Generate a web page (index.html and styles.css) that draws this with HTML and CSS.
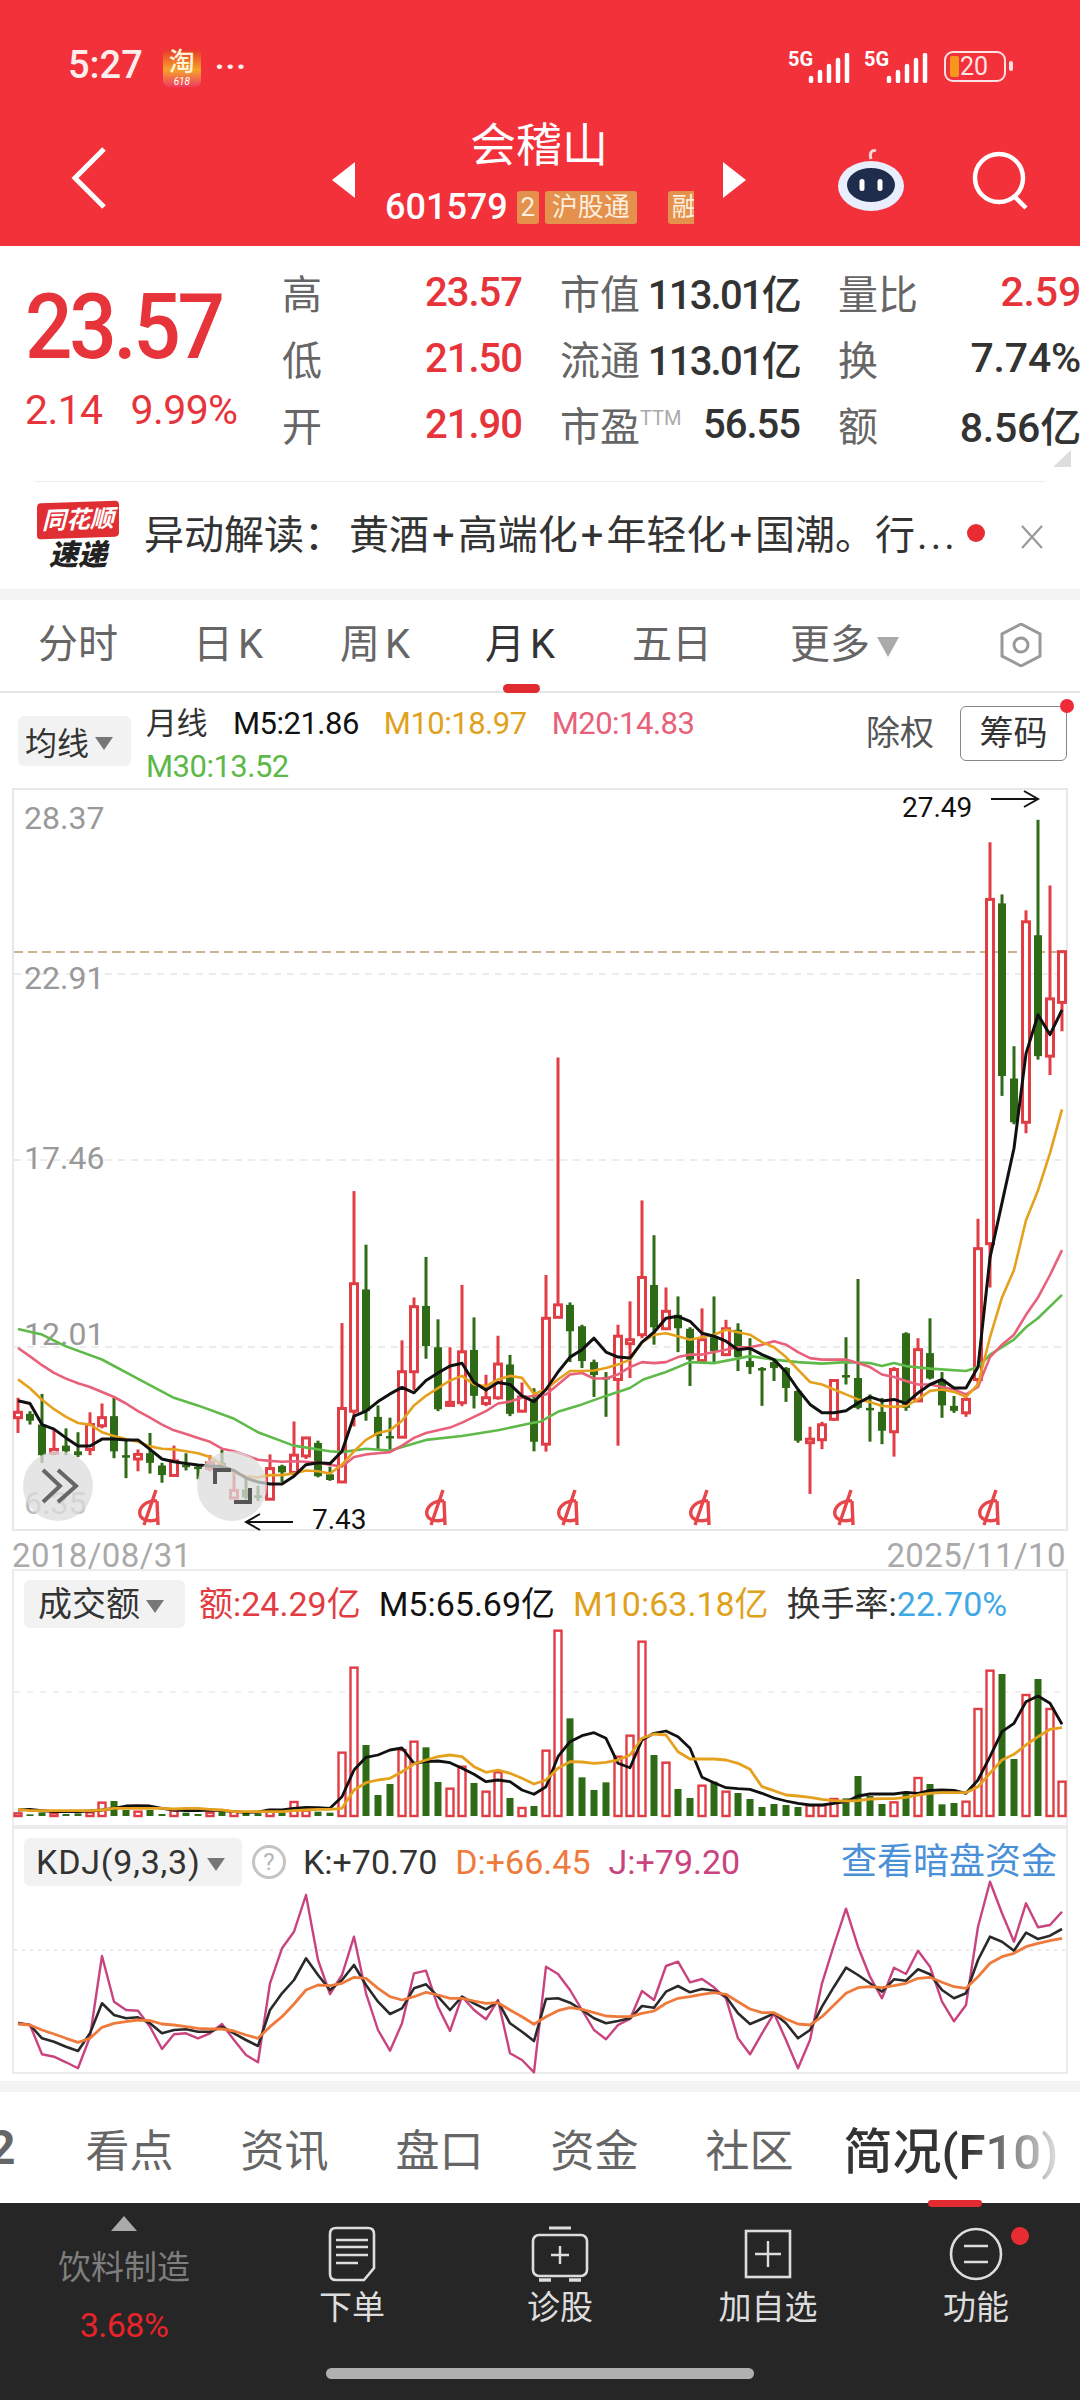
FILE: index.html
```html
<!DOCTYPE html>
<html lang="zh-CN">
<head>
  <meta charset="UTF-8" />
  <title>会稽山 601579</title>
  <link rel="stylesheet" href="styles.css">
</head>
<body>

<header class="top">
  <div class="status">
    <span class="clock">5:27</span>
    <span class="tb-icon"><b>淘</b><i>618</i></span>
    <span class="more-dots">···</span>
    <span class="status-right">
      <span class="signal"><em>5G</em><svg width="44" height="30" viewBox="0 0 44 30"><g stroke="#fff" stroke-width="4.5" stroke-linecap="round"><path d="M3 28v-3"/><path d="M12 28v-9"/><path d="M21 28v-15"/><path d="M30 28v-21"/><path d="M39 28v-26"/></g></svg></span>
      <span class="signal"><em>5G</em><svg width="44" height="30" viewBox="0 0 44 30"><g stroke="#fff" stroke-width="4.5" stroke-linecap="round"><path d="M3 28v-3"/><path d="M12 28v-9"/><path d="M21 28v-15"/><path d="M30 28v-21"/><path d="M39 28v-26"/></g></svg></span>
      <span class="battery"><i></i><b>20</b></span><span class="battery-nub"></span>
    </span>
  </div>
  <div class="titlebar">
    <svg class="back" width="40" height="64" viewBox="0 0 40 64"><path d="M34 3 L5 32 L34 61" fill="none" stroke="#fff" stroke-width="5"/></svg>
    <div class="title-mid">
      <span class="tri-left"></span>
      <div class="title-text">
        <h1>会稽山</h1>
        <div class="code-row"><span class="code">601579</span><span class="tag tag-num">2</span><span class="tag">沪股通</span><span class="tag tag-cut">融</span></div>
      </div>
      <span class="tri-right"></span>
    </div>
    <svg class="robot" width="70" height="66" viewBox="0 0 70 66">
      <path d="M35 12 C33 6 36 2 40 4" fill="none" stroke="#f4d5d8" stroke-width="3"/>
      <ellipse cx="35" cy="39" rx="33" ry="25" fill="#e8eefb"/>
      <ellipse cx="35" cy="38" rx="24" ry="17" fill="#1f2d4d"/>
      <rect x="23.5" y="32" width="5" height="12" rx="2.5" fill="#fff"/>
      <rect x="41.5" y="32" width="5" height="12" rx="2.5" fill="#fff"/>
    </svg>
    <svg class="search" width="58" height="60" viewBox="0 0 58 60"><circle cx="27" cy="27" r="24" fill="none" stroke="#fff" stroke-width="4.5"/><path d="M42 45 L54 57" stroke="#fff" stroke-width="4.5"/></svg>
  </div>
</header>

<section class="quote">
  <div class="price-box">
    <div class="price">23.57</div>
    <div class="change"><span>2.14</span><span>9.99%</span></div>
  </div>
  <div class="stats">
    <div class="stat"><label>高</label><span class="up">23.57</span></div>
    <div class="stat"><label>市值</label><span class="tight">113.01亿</span></div>
    <div class="stat wide"><label>量比</label><span class="up">2.59</span></div>
    <div class="stat"><label>低</label><span class="up">21.50</span></div>
    <div class="stat"><label>流通</label><span class="tight">113.01亿</span></div>
    <div class="stat wide"><label>换</label><span>7.74%</span></div>
    <div class="stat"><label>开</label><span class="up">21.90</span></div>
    <div class="stat"><label>市盈<sup>TTM</sup></label><span>56.55</span></div>
    <div class="stat wide"><label>额</label><span>8.56亿</span></div>
  </div>
  <span class="corner"></span>
</section>

<section class="notice">
  <div class="notice-logo"><b>同花顺</b><strong>速递</strong></div>
  <p>异动解读<u>：</u>黄酒<i>+</i>高端化<i>+</i>年轻化<i>+</i>国潮。行<s>...</s></p>
  <span class="dot"></span>
  <svg class="close" width="24" height="26" viewBox="0 0 24 26"><path d="M2 2 L22 24 M22 2 L2 24" stroke="#999" stroke-width="2.2"/></svg>
</section>

<nav class="period">
  <a>分时</a><a>日K</a><a>周K</a><a class="on">月K</a><a>五日</a><a class="more">更多<span class="arrow-down"></span></a>
  <svg class="hex" width="46" height="44" viewBox="0 0 46 44"><path d="M12 3 H34 L44 22 L34 41 H12 L2 22 Z" transform="rotate(90 23 22)" fill="none" stroke="#999" stroke-width="3"/><circle cx="23" cy="22" r="7" fill="none" stroke="#999" stroke-width="3"/></svg>
</nav>

<section class="ma-legend">
  <div class="chip"><span>均线</span><span class="arrow-down small"></span></div>
  <div class="ma-values">
    <span class="ma-name">月线</span><span class="c-black">M5:21.86</span><span class="c-orange">M10:18.97</span><span class="c-pink">M20:14.83</span><span class="c-green">M30:13.52</span>
  </div>
  <span class="fq">除权</span>
  <span class="chouma">筹码<i></i></span>
</section>

<section class="panel panel-k"><svg id="kline" width="1080" height="743"></svg></section>

<div class="dates"><span>2018/08/31</span><span>2025/11/10</span></div>

<section class="panel panel-vol">
  <svg id="vol" width="1080" height="258"></svg>
  <div class="panel-head">
    <div class="chip chip-vol"><span>成交额</span><span class="arrow-down small"></span></div>
    <span class="c-red">额:24.29亿</span><span class="c-black">M5:65.69亿</span><span class="c-orange">M10:63.18亿</span><span class="c-dark">换手率:<span class="c-blue">22.70%</span></span>
  </div>
</section>

<section class="panel panel-kdj">
  <svg id="kdj" width="1080" height="254"></svg>
  <div class="panel-head">
    <div class="chip chip-kdj"><span>KDJ(9,3,3)</span><span class="arrow-down small"></span></div>
    <span class="help">?</span>
    <span class="c-dark">K:+70.70</span><span class="c-d">D:+66.45</span><span class="c-j">J:+79.20</span>
    <a class="dark-pool">查看暗盘资金</a>
  </div>
</section>

<nav class="sub-tabs">
  <a class="cut">2</a><a>看点</a><a>资讯</a><a>盘口</a><a>资金</a><a>社区</a><a class="on">简况(F10)</a>
</nav>

<footer class="bottom">
  <div class="sector">
    <span class="tri-up"></span>
    <span class="sector-name">饮料制造</span>
    <span class="sector-pct">3.68%</span>
  </div>
  <a class="act">
    <svg width="48" height="56" viewBox="0 0 48 56"><path d="M8 2 H40 Q46 2 46 8 V42 L36 54 H8 Q2 54 2 48 V8 Q2 2 8 2 Z" fill="none" stroke="#ddd" stroke-width="2.6"/><path d="M8 14 H40 M8 21 H40 M8 29 H40 M8 37 H30" stroke="#ddd" stroke-width="2.6"/></svg>
    <span>下单</span>
  </a>
  <a class="act">
    <svg width="58" height="56" viewBox="0 0 58 56"><path d="M18 2 H40" stroke="#ddd" stroke-width="3"/><rect x="2" y="9" width="54" height="41" rx="6" fill="none" stroke="#ddd" stroke-width="2.6"/><path d="M8 54 H20 M38 54 H50" stroke="#ddd" stroke-width="3.5"/><path d="M29 20 V38 M20 29 H38" stroke="#ddd" stroke-width="2.4"/></svg>
    <span>诊股</span>
  </a>
  <a class="act">
    <svg width="48" height="56" viewBox="0 0 48 56"><rect x="2" y="5" width="44" height="46" fill="none" stroke="#ddd" stroke-width="2.6"/><path d="M24 15 V41 M11 28 H37" stroke="#ddd" stroke-width="2.4"/></svg>
    <span>加自选</span>
  </a>
  <a class="act">
    <svg width="54" height="56" viewBox="0 0 54 56"><circle cx="27" cy="28" r="25" fill="none" stroke="#ddd" stroke-width="2.6"/><path d="M15 20 H39 M15 36 H39" stroke="#ddd" stroke-width="2.6"/></svg>
    <span>功能</span>
    <i class="act-dot"></i>
  </a>
  <div class="home-bar"></div>
</footer>

<script src="chart.js"></script>
</body>
</html>
```

FILE: styles.css
```css
* { box-sizing: border-box; }
html, body { margin: 0; padding: 0; }
body {
  width: 1080px;
  height: 2400px;
  overflow: hidden;
  background: #fff;
  font-family: Roboto, "Noto Sans CJK SC", sans-serif;
  color: #333;
}
p, h1 { margin: 0; }
i, em { font-style: normal; }

/* red header */
.top { height: 246px; background: #f2313b; color: #fff; }
.status { height: 118px; padding: 46px 0 0 68px; display: flex; align-items: flex-start; }
.clock { font-size: 38px; line-height: 38px; font-weight: 500; color: #fdeeee; }
.tb-icon {
  width: 38px;
  height: 38px;
  margin: 3px 0 0 20px;
  border-radius: 6px;
  background: linear-gradient(#e8342a, #f5a32c 55%, #ef3b62);
  display: flex;
  flex-direction: column;
  align-items: center;
}
.tb-icon b { font-size: 26px; line-height: 27px; font-weight: 500; color: #fff3d8; }
.tb-icon i { font-size: 10px; line-height: 11px; color: #fff; font-style: italic; }
.more-dots { margin: 1px 0 0 14px; font-size: 32px; line-height: 38px; font-weight: 700; color: #fdeeee; letter-spacing: 1px; }
.status-right { margin-left: auto; padding-right: 67px; display: flex; align-items: flex-start; margin-top: 5px; }
.signal { position: relative; width: 76px; height: 32px; display: flex; justify-content: flex-end; padding-right: 14px; }
.signal + .signal { width: 78px; }
.signal em { position: absolute; left: -2px; top: -1px; font-size: 20px; line-height: 18px; font-weight: 700; }
.signal svg { display: block; margin-top: 2px; }
.battery {
  width: 62px;
  height: 31px;
  border: 2.5px solid #fde3e3;
  border-radius: 9px;
  display: flex;
  align-items: center;
  padding-left: 4px;
  gap: 1px;
}
.battery i { width: 9px; height: 21px; background: #f5961d; border-radius: 2px; }
.battery b { font-size: 25px; line-height: 26px; font-weight: 400; color: #fde3e3; }
.battery-nub { width: 4px; height: 10px; margin: 10px 0 0 3px; background: #fde3e3; border-radius: 2px; }

.titlebar { height: 128px; position: relative; display: flex; align-items: flex-start; padding-left: 70px; }
.back { margin-top: 28px; flex: none; width: 40px; }
.title-mid { width: 414px; margin-left: 222px; display: flex; align-items: flex-start; }
.tri-left, .tri-right { width: 0; height: 0; margin-top: 44px; border-top: 18px solid transparent; border-bottom: 18px solid transparent; flex: none; }
.tri-left { border-right: 23px solid #fff; }
.tri-right { border-left: 23px solid #fff; }
.title-text { width: 369px; text-align: center; }
.title-text h1 { font-size: 46px; line-height: 52px; font-weight: 400; margin: 1px 0 0 0; }
.code-row { margin-top: 14px; padding-left: 30px; height: 44px; width: 339px; display: flex; align-items: center; overflow: hidden; }
.code { font-size: 36px; line-height: 44px; font-weight: 500; margin-right: 9px; flex: none; }
.tag { height: 33px; padding: 0 7px; background: #e3914d; color: #fdeedd; font-size: 26px; line-height: 33px; border-radius: 3px; flex: none; margin-right: 6px; }
.tag-num { width: 22px; padding: 0; text-align: center; }
.tag-cut { margin-left: 25px; margin-right: 0; overflow: hidden; width: 26px; padding: 0 0 0 4px; border-radius: 3px 0 0 3px; }
.robot { position: absolute; left: 836px; top: 29px; }
.search { position: absolute; left: 972px; top: 33px; }

/* quote */
.quote { height: 235px; padding-top: 13px; display: flex; position: relative; }
.price-box { width: 282px; flex: none; padding: 24px 0 0 25px; }
.price { font-size: 90px; line-height: 90px; font-weight: 500; color: #e6343a; letter-spacing: -3.6px; transform: scaleX(0.93); transform-origin: left center; }
.change { margin-top: 17px; display: flex; gap: 28px; font-size: 41px; line-height: 40px; color: #e6343a; letter-spacing: -0.6px; }
.stats { display: grid; grid-template-columns: 240px 240px 243px; grid-auto-rows: 66px; column-gap: 38px; }
.stat { display: flex; justify-content: space-between; align-items: center; font-size: 40px; color: #333; white-space: nowrap; }
.stat label { color: #666; font-size: 40px; }
.stat span { letter-spacing: -1px; font-weight: 500; }
.stat span.tight { letter-spacing: -1.8px; }
.stat.wide span { font-size: 41px; letter-spacing: -0.2px; }
.stat .up { color: #e6343a; }
.stat sup { font-size: 20px; color: #aaa; vertical-align: 16px; line-height: 0; }
.corner { position: absolute; left: 1053px; top: 204px; width: 0; height: 0; border-bottom: 17px solid #ddd; border-left: 18px solid transparent; }

.notice { height: 108px; margin: 0 35px; border-top: 1px solid #ededed; display: flex; align-items: center; position: relative; }
.notice-logo { width: 82px; margin-left: 2px; flex: none; text-align: center; line-height: 1; }
.notice-logo b {
  display: block;
  height: 36px;
  background: #e02f33;
  color: #fff;
  border-radius: 4px;
  font-size: 24px;
  line-height: 36px;
  font-style: italic;
  transform: skewY(-2deg);
}
.notice-logo strong { display: block; margin-top: 2px; font-size: 29px; line-height: 30px; font-style: italic; font-weight: 900; color: #222; }
.notice p { margin-left: 25px; font-size: 40px; line-height: 48px; color: #333; white-space: nowrap; }
.notice p i { padding: 0 3px; }
.notice p u { text-decoration: none; padding-right: 5px; }
.notice p s { text-decoration: none; letter-spacing: 3px; margin-left: 2px; }
.notice .dot { position: absolute; left: 932px; top: 42px; width: 18px; height: 18px; background: #e82c31; border-radius: 50%; }
.notice .close { position: absolute; left: 985px; top: 42px; }

/* period tabs */
.period { height: 104px; border-top: 11px solid #f4f4f4; border-bottom: 2px solid #e6e6e6; position: relative; display: flex; align-items: flex-start; padding: 21px 0 0 38px; }
.period a { font-size: 40px; line-height: 48px; color: #666; white-space: nowrap; }
.period a:nth-child(1) { width: 155px; }
.period a:nth-child(2) { width: 147px; letter-spacing: 5px; }
.period a:nth-child(3) { width: 145px; letter-spacing: 5px; }
.period a:nth-child(4) { width: 147px; letter-spacing: 5px; }
.period a:nth-child(5) { width: 158px; }
.period a.on { color: #333; position: relative; }
.period a.on::after { content: ""; position: absolute; left: 18px; top: 63px; width: 37px; height: 9px; background: #e22b30; border-radius: 5px; }
.period .more { display: flex; align-items: center; height: 48px; }
.arrow-down { width: 0; height: 0; margin: 4px 0 0 7px; border-left: 11px solid transparent; border-right: 11px solid transparent; border-top: 20px solid #aaa; display: inline-block; }
.arrow-down.small { border-left-width: 9px; border-right-width: 9px; border-top: 13px solid #777; margin: 4px 0 0 6px; }
.hex { position: absolute; left: 998px; top: 23px; }

.ma-legend { height: 95px; position: relative; display: flex; padding: 23px 0 0 18px; }
.chip { height: 50px; padding: 0 7px; background: #f2f2f2; border-radius: 6px; display: inline-flex; align-items: center; font-size: 32px; color: #333; white-space: nowrap; flex: none; }
.ma-legend .chip { width: 113px; }
.ma-values { width: 570px; margin: -13px 0 0 15px; display: flex; flex-wrap: wrap; column-gap: 25px; font-size: 31px; line-height: 41px; letter-spacing: -0.5px; white-space: nowrap; }
.ma-name { color: #333; margin-right: 1px; }
.fq { position: absolute; left: 866px; top: 18px; font-size: 34px; line-height: 44px; color: #555; }
.chouma { position: absolute; left: 960px; top: 13px; width: 107px; height: 55px; border: 1.5px solid #888; border-radius: 6px; font-size: 34px; line-height: 52px; text-align: center; color: #333; }
.chouma i { position: absolute; right: -8px; top: -8px; width: 14px; height: 14px; background: #ef2a38; border-radius: 50%; }

.c-black { color: #111; }
.c-orange { color: #e0a11b; }
.c-pink { color: #e8607a; }
.c-green { color: #5cb848; }
.c-red { color: #e23b41; }
.c-dark { color: #333; }
.c-blue { color: #3fa9e5; }
.c-d { color: #ee7a3c; }
.c-j { color: #c9437f; }

/* chart panels */
.panel { position: relative; }
.panel svg { display: block; overflow: visible; }
.panel-k { height: 743px; }
.panel-vol { height: 258px; }
.panel-kdj { height: 254px; }
.dates { height: 38px; padding: 6px 14px 0 12px; display: flex; justify-content: space-between; font-size: 33px; line-height: 38px; color: #aaa; letter-spacing: 0.4px; }
.panel-head { position: absolute; left: 24px; top: 11px; right: 0; display: flex; align-items: center; gap: 18px; font-size: 34px; line-height: 48px; white-space: nowrap; }
.chip-vol { width: 161px; height: 48px; padding-left: 14px; font-size: 34px; margin-right: -4px; }
.chip-kdj { width: 218px; height: 48px; padding-left: 12px; margin-right: -8px; font-size: 34px; letter-spacing: 0.8px; }
.help { width: 34px; height: 34px; border: 3px solid #c4c4c4; border-radius: 50%; color: #b5b5b5; font-size: 24px; line-height: 28px; text-align: center; margin-right: -1px; }
.dark-pool { position: absolute; left: 817px; top: 2px; font-size: 36px; line-height: 44px; color: #4a90d9; }

/* bottom tabs */
.sub-tabs { height: 122px; border-top: 11px solid #f4f4f4; display: flex; align-items: center; gap: 67px; overflow: hidden; }
.sub-tabs a { font-size: 44px; color: #666; white-space: nowrap; flex: none; }
.sub-tabs .cut { margin-left: -12px; margin-right: 3px; font-size: 48px; font-weight: 700; }
.sub-tabs .on {
  margin-left: -17px;
  font-size: 49px;
  font-weight: 500;
  background: linear-gradient(90deg, #333 0, #333 58%, #bbb 92%, #e0e0e0 100%);
  -webkit-background-clip: text;
  background-clip: text;
  color: transparent;
}

.bottom { height: 197px; background: #262626; position: relative; display: grid; grid-template-columns: 248px repeat(4, 208px); align-items: start; }
.bottom::before { content: ""; position: absolute; left: 928px; top: -3px; width: 54px; height: 7px; background: #e22b30; border-radius: 3px 3px 4px 4px; }
.sector { display: flex; flex-direction: column; align-items: center; padding-top: 13px; }
.tri-up { width: 0; height: 0; border-left: 13px solid transparent; border-right: 13px solid transparent; border-bottom: 15px solid #aaa; }
.sector-name { margin-top: 15px; font-size: 33px; line-height: 44px; color: #7e7e7e; }
.sector-pct { margin-top: 15px; font-size: 34px; line-height: 40px; color: #e8232a; letter-spacing: -0.5px; }
.act { display: flex; flex-direction: column; align-items: center; padding-top: 23px; color: #ddd; font-size: 33px; line-height: 44px; position: relative; }
.act svg { display: block; height: 56px; margin-bottom: 4px; }
.act-dot { position: absolute; left: 139px; top: 24px; width: 18px; height: 18px; background: #e82c31; border-radius: 50%; }
.home-bar { position: absolute; left: 326px; top: 165px; width: 428px; height: 11px; background: #b0b0b0; border-radius: 6px; }
```

FILE: chart.js
```js
// monthly k-line for the three panels. every number below is a y read off the picture
var RED = "#e23d44", GREEN = "#2f6b17";
var NS = "http://www.w3.org/2000/svg";

function xAt(i) { return 18 + 12 * i; }
function add(svg, tag, attrs, text) {
  var el = document.createElementNS(NS, tag);
  for (var k in attrs) el.setAttribute(k, attrs[k]);
  if (text) el.textContent = text;
  svg.appendChild(el);
  return el;
}

// [high, bodyTop, bodyBottom, low, type]
var left = [
  [1170,1208,1222,1262,"r"],[1205,1212,1230,1240,"g"],[1160,1240,1320,1340,"g"],[1255,1305,1315,1320,"r"],
  [1250,1295,1310,1320,"g"],[1260,1310,1320,1325,"g"],[1208,1240,1305,1320,"r"],[1185,1222,1243,1250,"r"],
  [1170,1218,1310,1328,"g"],[1280,1320,1324,1380,"g"],[1305,1318,1330,1362,"r"],[1262,1315,1340,1368,"g"],
  [1340,1347,1372,1392,"g"],[1295,1335,1373,1375,"r"],[1315,1345,1347,1360,"g"],[1345,1350,1353,1383,"g"],
  [1320,1340,1355,1362,"r"],[1305,1340,1345,1360,"g"],[1365,1412,1432,1435,"r"],[1375,1410,1430,1435,"g"],
  [1400,1425,1430,1440,"g"],[1318,1355,1435,1437,"r"],[1345,1348,1365,1390,"g"],[1232,1320,1365,1375,"r"],
  [1275,1275,1322,1330,"r"],[1282,1288,1375,1378,"g"],[1350,1370,1385,1387,"g"],[975,1198,1390,1392,"r"],
  [630,872,1205,1245,"r"],[770,887,1205,1230,"g"],[1190,1220,1270,1305,"g"],[1222,1270,1274,1305,"g"],
  [1020,1102,1273,1275,"r"],[908,932,1102,1150,"r"],[802,930,1035,1068,"g"],[965,1038,1200,1205,"g"],
  [1038,1182,1190,1192,"r"],[875,1050,1183,1192,"r"],[960,1045,1165,1198,"g"],[1110,1170,1185,1192,"r"],
  [1008,1082,1170,1175,"r"],[1058,1083,1212,1218,"g"],[1130,1168,1205,1208,"r"],[1145,1175,1285,1310,"g"]
];
var right = [
  [995,1082,1335,1350,"r"],[558,1055,1080,1082,"r"],[1050,1055,1108,1170,"g"],[1095,1098,1168,1182,"g"],
  [1165,1170,1196,1240,"g"],[1190,1200,1204,1280,"g"],[1095,1118,1205,1338,"r"],[1048,1125,1133,1202,"r"],
  [845,1000,1115,1122,"r"],[915,1015,1100,1135,"g"],[1020,1068,1103,1105,"r"],[1038,1075,1102,1150,"g"],
  [1100,1103,1165,1218,"g"],[1062,1125,1167,1170,"r"],[1038,1120,1148,1170,"g"],[1085,1103,1155,1158,"r"],
  [1092,1105,1160,1188,"g"],[1122,1168,1180,1194,"g"],[1180,1182,1186,1258,"g"],[1165,1170,1182,1208,"g"],
  [1180,1182,1222,1250,"g"],[1225,1228,1328,1332,"g"],[1300,1325,1332,1435,"r"],[1290,1296,1326,1345,"r"],
  [1205,1207,1285,1288,"r"],[1120,1196,1199,1215,"g"],[1003,1202,1262,1265,"g"],[1235,1262,1266,1330,"g"],
  [1242,1270,1308,1335,"g"],[1180,1185,1310,1360,"r"],[1110,1112,1262,1268,"g"],[1122,1145,1248,1250,"r"],
  [1082,1152,1203,1205,"g"],[1190,1205,1257,1282,"g"],[1238,1258,1268,1272,"g"],[1238,1245,1272,1280,"r"],
  [882,942,1205,1215,"r"],[125,240,932,1020,"r"],[230,248,595,635,"g"],[535,600,688,692,"g"],
  [262,285,688,710,"r"],[80,312,555,562,"g"],[212,440,555,593,"r"],[345,345,447,505,"r"]
];

function yLeft(z) { return 950 + z / 2.613 - 788; }
function yRight(z) { return 780 + z / 2.01 - 788; }

var ma5L = [1178,1185,1240,1252,1275,1296,1296,1278,1278,1280,1280,1305,1330,1337,1342,1346,1348,1350,1360,1380,1390,1395,1395,1375,1345,1340,1342,1310,1218,1205,1180,1160,1143,1157,1125,1105,1087,1080,1130,1150,1130,1135,1165,1180];
var ma5R = [1225,1190,1160,1145,1122,1150,1160,1162,1130,1110,1082,1078,1088,1112,1118,1128,1145,1142,1155,1165,1190,1225,1255,1272,1272,1268,1252,1240,1248,1245,1253,1232,1215,1205,1222,1222,1180,960,850,740,550,472,512,462];
var ma10L = [1122,1145,1175,1200,1220,1236,1240,1260,1270,1278,1285,1297,1303,1305,1310,1315,1325,1345,1365,1375,1378,1372,1372,1368,1360,1362,1368,1345,1310,1280,1262,1255,1230,1190,1165,1145,1125,1113,1135,1140,1122,1113,1118,1160];
var ma10R = [1225,1205,1188,1188,1187,1182,1175,1165,1130,1115,1112,1118,1125,1120,1115,1105,1110,1115,1130,1140,1160,1185,1210,1215,1225,1235,1245,1250,1258,1260,1258,1245,1228,1225,1230,1240,1215,1120,1040,985,885,825,750,662];
var ma20L = [1040,1062,1085,1105,1120,1132,1142,1155,1168,1185,1205,1222,1240,1255,1265,1275,1285,1303,1310,1320,1332,1335,1337,1336,1337,1340,1345,1350,1325,1318,1315,1312,1295,1275,1262,1255,1248,1235,1220,1205,1185,1180,1170,1165];
var ma20R = [1235,1215,1195,1192,1203,1203,1195,1180,1170,1172,1170,1160,1155,1155,1150,1145,1140,1140,1135,1128,1135,1150,1162,1165,1165,1165,1172,1180,1195,1200,1208,1215,1215,1220,1225,1235,1220,1160,1135,1115,1075,1040,995,945];
var ma30L = [[52,990],[122,1005],[190,1035],[296,1070],[400,1120],[505,1170],[574,1190],[680,1225],[749,1260],[853,1295],[958,1310],[993,1312],[1063,1303],[1133,1308],[1237,1280],[1341,1270],[1446,1255],[1551,1235]];
var ma30R = [[0,1290],[52,1270],[122,1255],[191,1238],[261,1222],[300,1205],[366,1190],[435,1170],[505,1172],[610,1158],[680,1165],[749,1170],[819,1173],[888,1170],[958,1172],[993,1178],[1028,1172],[1063,1178],[1133,1183],[1237,1188],[1272,1180],[1307,1155],[1376,1125],[1411,1100],[1446,1082],[1516,1035]];

function poly(svg, pts, color, width) {
  add(svg, "polyline", { points: pts.join(" "), fill: "none", stroke: color, "stroke-width": width, "stroke-linejoin": "round" });
}
function series(a, b, ya, yb) {
  var pts = [];
  a.forEach(function (v, i) { pts.push(xAt(i) + "," + ya(v).toFixed(1)); });
  b.forEach(function (v, i) { pts.push(xAt(i + a.length) + "," + yb(v).toFixed(1)); });
  return pts;
}

function drawKline() {
  var svg = document.getElementById("kline");
  add(svg, "rect", { x: 13, y: 1, width: 1054, height: 741, fill: "none", stroke: "#e8e8e8", "stroke-width": 2 });

  [186, 372, 559].forEach(function (y) {
    add(svg, "line", { x1: 14, x2: 1066, y1: y, y2: y, stroke: "#e6e6e6", "stroke-width": 1.5, "stroke-dasharray": "7 6" });
  });
  add(svg, "line", { x1: 14, x2: 1066, y1: 164, y2: 164, stroke: "#c9b48f", "stroke-width": 2, "stroke-dasharray": "9 5" });

  var labels = [["28.37", 30], ["22.91", 190], ["17.46", 370], ["12.01", 546], ["6.35", 715]];
  labels.forEach(function (l) {
    add(svg, "text", { x: 24, y: l[1] + 11, "font-size": 32, fill: l[0] == "6.35" ? "#bbb" : "#999" }, l[0]);
  });

  function candle(c, i, y) {
    var x = xAt(i), color = c[4] == "r" ? RED : GREEN;
    add(svg, "line", { x1: x, x2: x, y1: y(c[0]), y2: y(c[3]), stroke: color, "stroke-width": 3 });
    if (c[4] == "r") {
      add(svg, "rect", { x: x - 3.5, y: y(c[1]), width: 7, height: Math.max(y(c[2]) - y(c[1]), 2), fill: "#fff", stroke: color, "stroke-width": 3 });
    } else {
      add(svg, "rect", { x: x - 4, y: y(c[1]), width: 8, height: Math.max(y(c[2]) - y(c[1]), 2.5), fill: color });
    }
  }
  left.forEach(function (c, i) { candle(c, i, yLeft); });
  right.forEach(function (c, i) { candle(c, i + left.length, yRight); });

  var green = ma30L.map(function (p) { return (p[0] / 2.904).toFixed(1) + "," + yLeft(p[1]).toFixed(1); })
    .concat(ma30R.map(function (p) { return (540 + p[0] / 2.904).toFixed(1) + "," + yRight(p[1]).toFixed(1); }));
  poly(svg, green, "#5fba4a", 2.6);
  poly(svg, series(ma20L, ma20R, yLeft, yRight), "#e8607a", 2.6);
  poly(svg, series(ma10L, ma10R, yLeft, yRight), "#e5a11d", 2.6);
  poly(svg, series(ma5L, ma5R, yLeft, yRight), "#111", 3);

  // dividend marks
  [150, 437, 569, 701, 845, 990].forEach(function (x) {
    add(svg, "path", {
      d: "M" + (x + 6) + " 702 L" + (x - 6) + " 737 M" + (x + 7) + " 713 L" + (x + 8) + " 737 M" + (x + 7) + " 713 C" + (x - 4) + " 712 " + (x - 12) + " 720 " + (x - 10) + " 727 C" + (x - 8) + " 733 " + (x + 2) + " 734 " + (x + 8) + " 731",
      fill: "none", stroke: "#e8454b", "stroke-width": 3.4
    });
  });

  // high and low markers
  add(svg, "text", { x: 902, y: 29, "font-size": 28, fill: "#111" }, "27.49");
  add(svg, "path", { d: "M991 11 H1037 M1024 3 L1038 11 L1024 19", fill: "none", stroke: "#111", "stroke-width": 2 });
  add(svg, "text", { x: 312, y: 741, "font-size": 28, fill: "#111" }, "7.43");
  add(svg, "path", { d: "M293 734 H247 M260 726 L246 734 L260 742", fill: "none", stroke: "#111", "stroke-width": 2 });

  // the two floating round buttons
  add(svg, "circle", { cx: 58, cy: 698, r: 35, fill: "#dcdcdc", "fill-opacity": 0.75 });
  add(svg, "path", { d: "M43 682 L60 698 L43 714 M58 682 L76 698 L58 714", fill: "none", stroke: "#666", "stroke-width": 4 });
  add(svg, "circle", { cx: 232, cy: 698, r: 35, fill: "#dcdcdc", "fill-opacity": 0.75 });
  add(svg, "path", { d: "M215 696 V682 H231 M234 714 H250 V700", fill: "none", stroke: "#555", "stroke-width": 4 });
}

var volL = [760,763,757,760,762,760,757,728,723,750,755,750,762,752,758,762,758,755,755,758,760,750,755,726,752,755,758,578,323,555,705,672,570,545,562,666,686,620,669,695,637,714,744,738];
var volR = [572,212,475,652,690,667,590,527,245,585,608,687,714,677,665,695,699,717,741,732,735,741,736,736,717,715,648,708,732,727,695,654,672,733,729,725,447,332,342,597,405,357,447,665];
var volBlackL = [750,748,752,755,755,755,753,750,745,738,737,738,745,750,752,752,750,752,755,757,756,750,750,745,742,743,745,710,630,592,585,570,564,610,605,603,608,625,643,665,660,665,690,703];
var volBlackR = [680,590,545,527,518,535,610,623,540,520,513,530,565,652,668,683,686,688,700,714,723,730,735,735,730,725,708,702,702,702,697,700,691,690,691,700,660,590,515,490,425,408,430,493];
var volOrangeL = [748,752,752,752,752,752,752,750,745,745,745,745,745,747,745,745,748,750,755,755,755,755,755,752,750,748,748,745,690,668,660,655,635,612,600,590,585,590,620,637,630,640,655,672];
var volOrangeR = [660,625,605,606,610,607,600,585,535,522,525,575,597,597,597,600,610,628,680,692,705,708,712,718,722,723,722,717,716,716,712,705,700,698,698,698,680,640,600,583,555,530,508,503];

function drawVol() {
  var svg = document.getElementById("vol");
  function y(z) { return 1560 + z / 3 - 1569; }
  add(svg, "rect", { x: 13, y: 1, width: 1054, height: 256, fill: "none", stroke: "#ececec", "stroke-width": 2 });
  add(svg, "line", { x1: 14, x2: 1066, y1: 123, y2: 123, stroke: "#ececec", "stroke-width": 1.5, "stroke-dasharray": "6 7" });
  var bottom = y(768);
  volL.concat(volR).forEach(function (top, i) {
    var up = left.concat(right)[i][4] == "r", x = xAt(i), t = y(top);
    if (up) add(svg, "rect", { x: x - 3.5, y: t, width: 7, height: Math.max(bottom - t, 2), fill: "#fff", stroke: RED, "stroke-width": 2.4 });
    else add(svg, "rect", { x: x - 3.5, y: t, width: 7, height: bottom - t, fill: GREEN });
  });
  poly(svg, series(volBlackL, volBlackR, y, y), "#111", 2.8);
  poly(svg, series(volOrangeL, volOrangeR, y, y), "#e5a11d", 2.8);
}

var kdjJ = [608,615,703,710,727,745,650,408,545,570,572,620,687,643,640,655,640,612,660,705,727,490,385,335,225,420,522,465,350,520,630,692,610,460,452,560,633,530,570,598,540,700,720,757,440,462,510,570,630,658,615,597,513,540,438,425,487,477,502,535,655,703,640,580,660,745,660,490,375,266,380,470,535,443,462,392,440,545,604,555,320,185,280,365,250,322,315,275];
var kdjK = [610,615,655,665,680,693,640,550,585,595,592,610,640,630,628,635,635,620,640,660,678,570,520,480,415,465,510,480,435,495,545,582,565,505,493,530,570,530,550,568,545,610,635,663,537,535,548,570,595,610,603,595,558,563,515,498,517,507,512,530,580,612,597,580,610,655,630,560,500,443,465,490,515,478,482,448,463,510,535,520,420,350,365,392,338,357,347,327];
var kdjD = [612,615,630,642,655,667,655,622,610,605,600,602,612,615,620,625,627,627,633,645,655,620,590,552,510,495,497,490,472,475,505,530,540,530,517,525,535,535,543,550,548,570,590,613,590,572,563,568,578,588,590,590,580,573,550,535,530,523,518,523,545,567,578,578,597,612,615,590,555,520,503,500,503,497,490,475,472,487,500,505,470,430,410,400,380,370,362,355];

function drawKdj() {
  var svg = document.getElementById("kdj");
  function y(z) { return 1820 + z / 3 - 1827; }
  function line(arr) { return arr.map(function (v, i) { return xAt(i) + "," + y(v).toFixed(1); }); }
  add(svg, "rect", { x: 13, y: 1, width: 1054, height: 245, fill: "none", stroke: "#ececec", "stroke-width": 2 });
  add(svg, "line", { x1: 14, x2: 1066, y1: 123, y2: 123, stroke: "#e2e2e2", "stroke-width": 1.5, "stroke-dasharray": "3 5" });
  poly(svg, line(kdjJ), "#c9437f", 2.4);
  poly(svg, line(kdjK), "#2a2a2a", 2.6);
  poly(svg, line(kdjD), "#ee7a3c", 2.8);
}

drawKline();
drawVol();
drawKdj();
```
